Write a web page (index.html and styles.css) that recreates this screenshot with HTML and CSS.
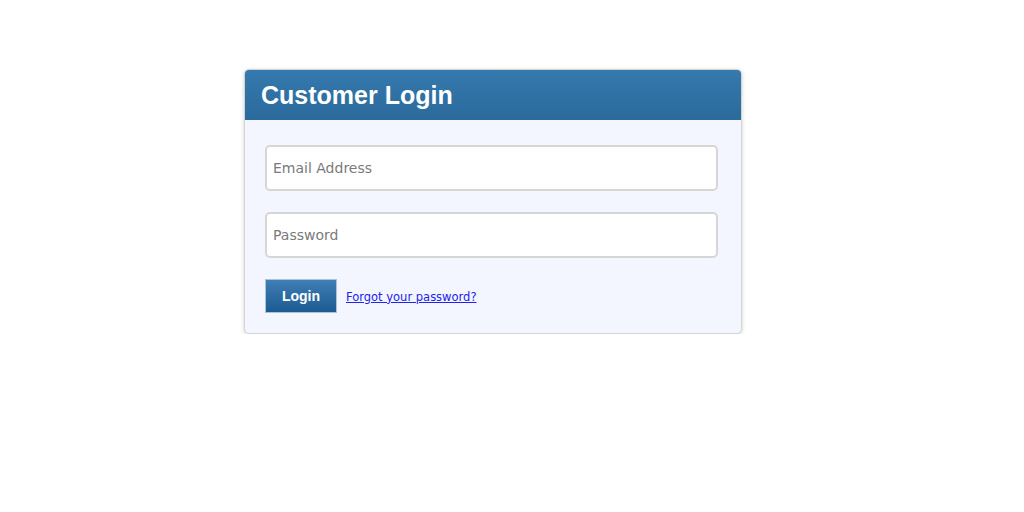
FILE: index.html
```html
<!DOCTYPE html>
<html lang="en">
<head>
  <meta charset="UTF-8" />
  <title>Customer Login</title>
  <link rel="stylesheet" href="styles.css">
</head>
<body>

  <div class="page">
    <div class="login-box">
      <div class="login-head">
        <h1>Customer Login</h1>
      </div>
      <form class="login-body">
        <input type="text" placeholder="Email Address" />
        <input type="password" placeholder="Password" />
        <div class="actions">
          <button type="button">Login</button>
          <a href="#">Forgot your password?</a>
        </div>
      </form>
    </div>
  </div>

</body>
</html>
```

FILE: styles.css
```css
body {
  margin: 0;
  padding: 0;
  background: #fff;
  font-family: "DejaVu Sans", Verdana, sans-serif;
}
.page {
  padding: 69px 0 0 244px;
}
.login-box {
  width: 496px;
  border: 1px solid #d4d4d4;
  border-radius: 5px;
  background: #f3f6fe;
  box-shadow: 0 1px 4px rgba(0,0,0,0.18);
  overflow: hidden;
}
.login-head {
  background: linear-gradient(#3579ae, #2b6a9b);
  height: 50px;
  display: flex;
  align-items: center;
  padding-left: 16px;
}
.login-head h1 {
  margin: 0;
  color: white;
  font-family: "Liberation Sans", Arial, sans-serif;
  font-size: 25px;
  font-weight: bold;
}
.login-body {
  display: flex;
  flex-direction: column;
  gap: 21px;
  padding: 25px 23px 20px 20px;
}
.login-body input {
  height: 46px;
  box-sizing: border-box;
  border: 2px solid #d6d6d6;
  border-radius: 5px;
  background: white;
  padding: 0 6px;
  font-family: "DejaVu Sans", Verdana, sans-serif;
  font-size: 14px;
  color: #333;
}
.login-body input::placeholder {
  color: #7a7a7a;
}
.actions {
  display: flex;
  align-items: center;
  gap: 9px;
}
.actions button {
  width: 72px;
  height: 34px;
  border: 1px solid #a9c3da;
  background: linear-gradient(#3e7fb5, #1c5a92);
  color: white;
  font-family: "Liberation Sans", Arial, sans-serif;
  font-size: 14px;
  font-weight: bold;
  cursor: pointer;
}
.actions a {
  font-size: 11.5px;
  color: #2222ee;
  margin-top: 1px;
}
```
